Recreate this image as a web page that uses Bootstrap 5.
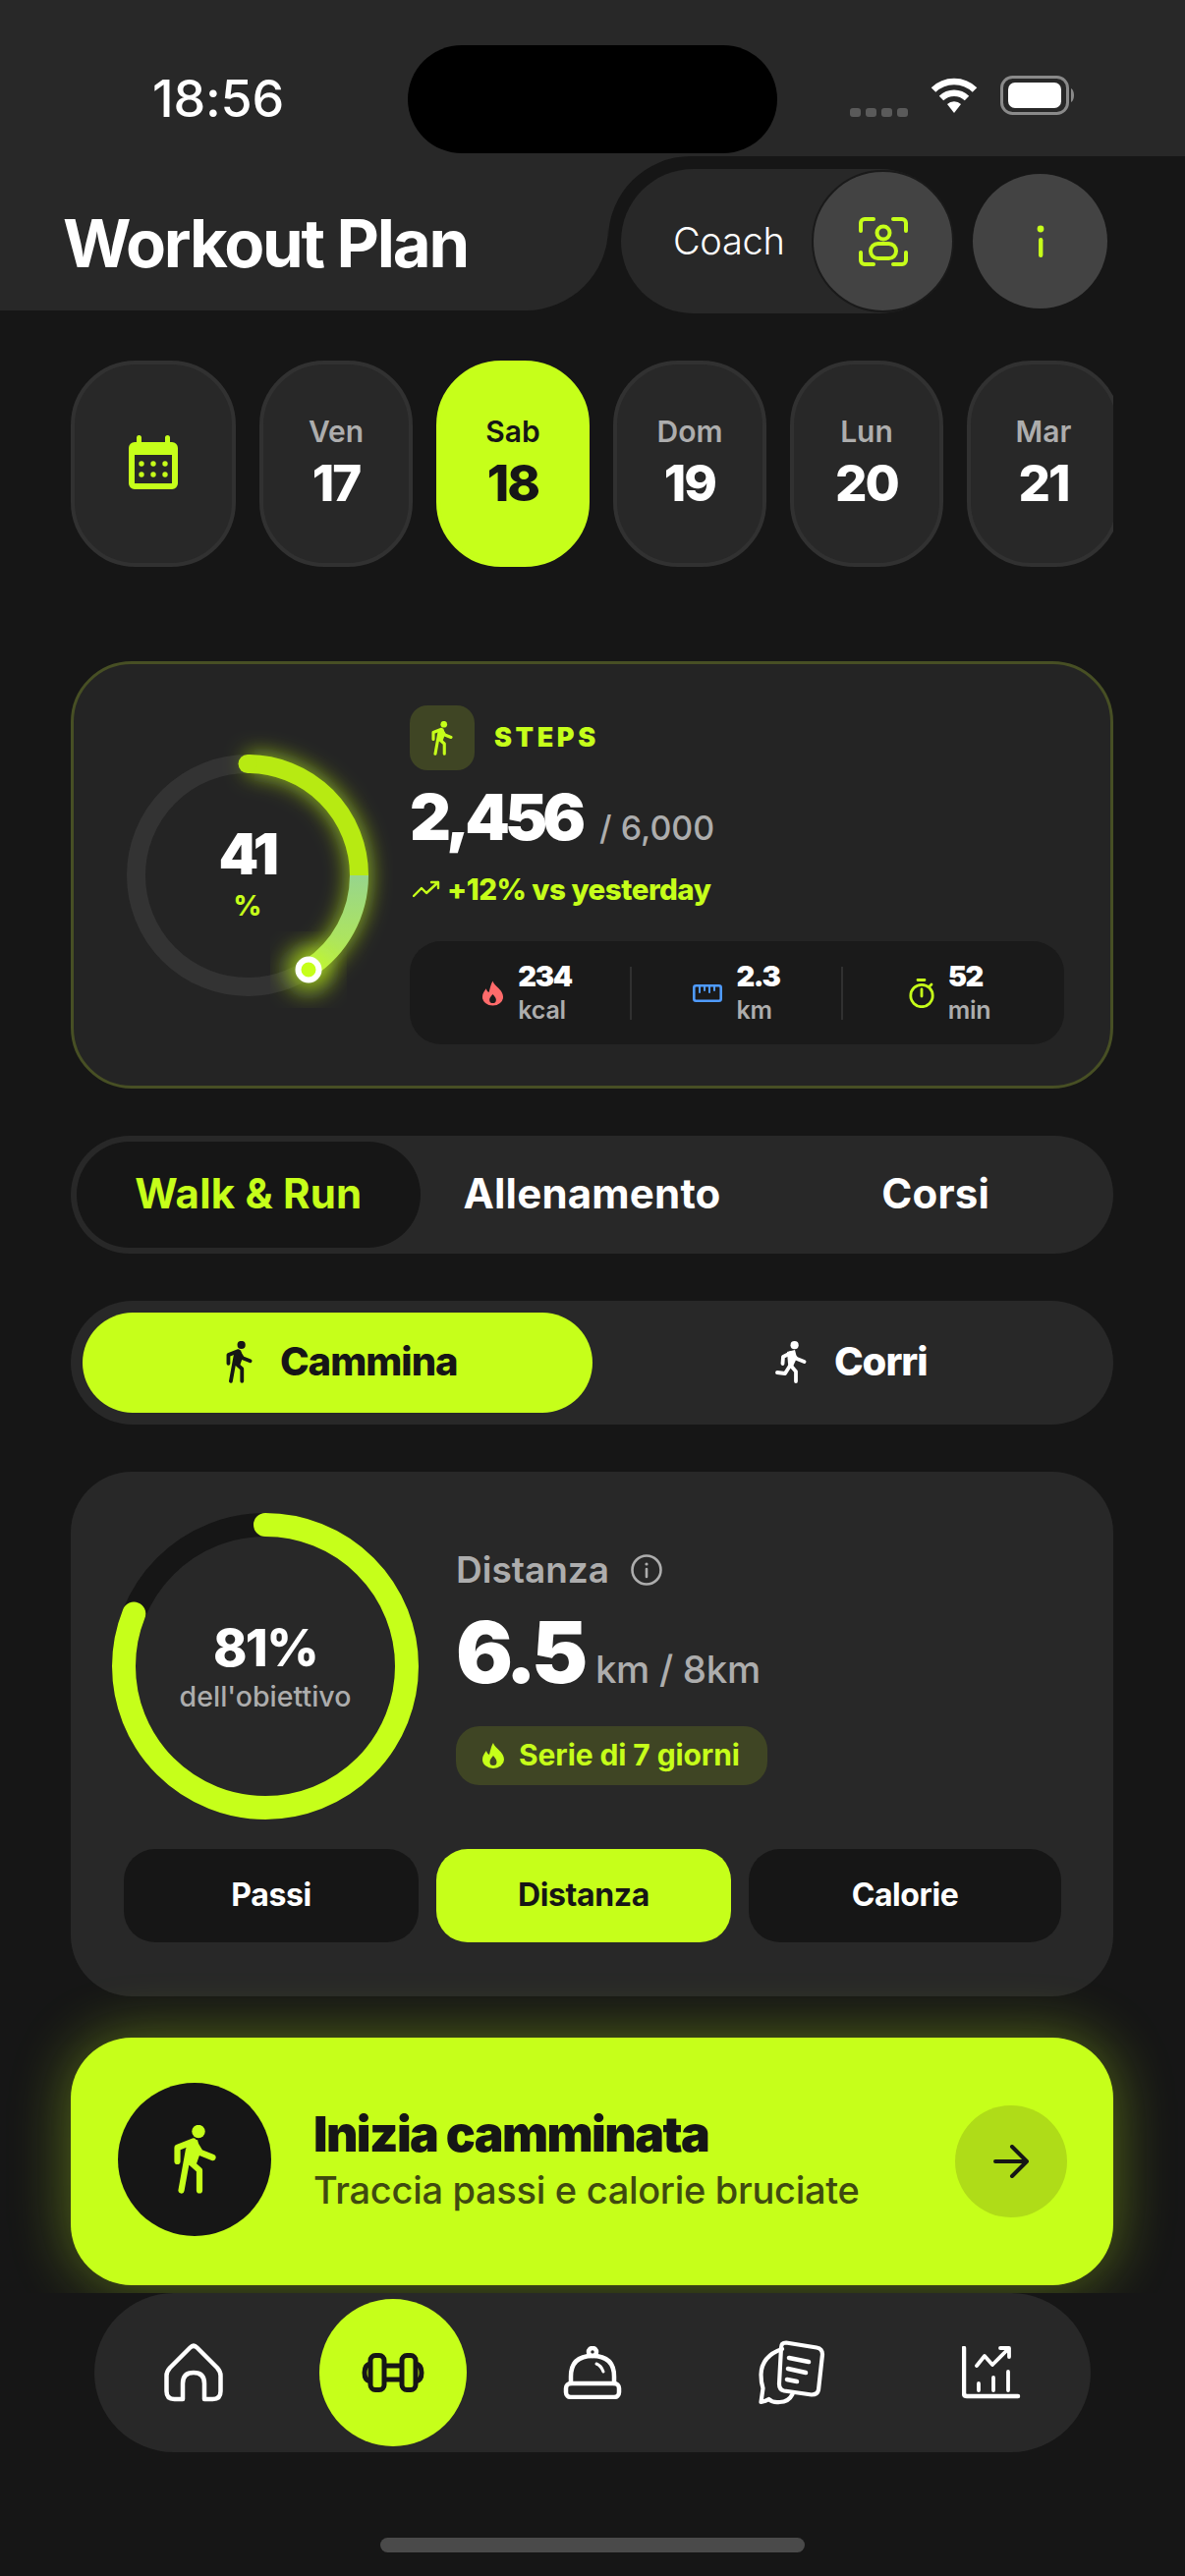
<!DOCTYPE html>
<html lang="it">
<head>
<meta charset="utf-8">
<title>Workout Plan</title>
<link href="https://cdn.jsdelivr.net/npm/bootstrap@5.3.0/dist/css/bootstrap.min.css" rel="stylesheet">
<style>
:root{--lime:#c6ff1a;--ink:#161616;--panel:#282828;--mute:#adadad;--olive:#3f4524}
html,body{background:var(--ink);margin:0}
body{width:1206px;height:2622px;overflow:hidden;font-family:Inter,"Liberation Sans",sans-serif;color:#fff}
svg{display:block;flex:none}
.statusbar{height:159px;background:var(--panel);padding-top:42px}
.clock{margin-left:155px;width:133px;font:500 52px/110px Inter,sans-serif;letter-spacing:-.2px;white-space:nowrap}
.island{margin-left:127px;width:376px;height:110px;border-radius:55px;background:#000}
.signal{margin-left:74px;gap:5px;margin-top:28px}
.signal i{display:block;width:11px;height:9px;border-radius:3px;background:#5a5a5a}
.wifi{margin-left:22px;margin-top:-7px}
.batt{margin-left:22px;margin-top:-7px}
.titlerow{height:160px}
.titleblock{width:619px;height:157px;background:var(--panel);border-bottom-right-radius:84px;padding-left:64px}
.pagetitle{font-size:67px;font-weight:700;letter-spacing:-2.2px;line-height:1;margin:20px 0 0;white-space:nowrap}
.coachwrap{flex:1;background:var(--panel)}
.coachin{height:160px;background:var(--ink);border-top-left-radius:84px;padding:13px 0 0 13px}
.coachpill{width:337px;height:147px;background:var(--panel);border-radius:74px;padding-left:53px}
.coachtxt{font-size:38px;font-weight:300;width:113px;letter-spacing:-.3px}
.coachico{width:145px;height:145px;margin:0 -2px 0 auto;border-radius:50%;background:#434343;border:2px solid #1a1a1a}
.infobtn{width:137px;height:137px;border-radius:50%;background:#434343;margin:5px 0 0 21px}
.page{padding:48px 73px 0 72px}
.days{height:210px;gap:24px;overflow:hidden}
.day{flex:0 0 156px;height:210px;border-radius:66px;background:var(--panel);border:4px solid #313131;padding-bottom:4px}
.day.calday{flex-basis:168px}
.dayname{font-size:30px;font-weight:600;color:var(--mute);line-height:34px}
.daynum{font-size:51px;font-weight:800;line-height:54px;letter-spacing:-2px;margin-top:9px}
.day.on{background:var(--lime);border-color:var(--lime)}
.day.on .dayname,.day.on .daynum{color:var(--ink)}
.stepcard{margin-top:96px;height:435px;background:#242424;border:3px solid #474f24;border-radius:62px;padding:0 47px 0 54px;gap:42px}
.ringbox{position:relative}
.ringlabel{position:absolute;inset:0}
.stepnum{font-size:58px;font-weight:900;line-height:60px;letter-spacing:-2.5px;margin-top:-3px}
.stepunit{font-size:28px;font-weight:800;color:var(--lime);line-height:34px;margin-top:6px}
.stepcol{flex:1;height:345px}
.stepicon{width:66px;height:66px;background:var(--olive);border-radius:18px}
.steplabel{font-size:27px;font-weight:900;color:var(--lime);letter-spacing:3.6px;margin-left:20px}
.stepbig{font-size:65px;font-weight:900;letter-spacing:-5px;line-height:60px;margin-top:18px}
.stepof{font-size:34px;font-weight:500;color:var(--mute);margin-left:19px;letter-spacing:0}
.trend{font-size:29.5px;font-weight:800;color:var(--lime);line-height:36px;margin:14px 0 0 3px;gap:7px;letter-spacing:-.5px}
.statbox{margin-top:auto;height:105px;background:#1a1a1a;border-radius:32px}
.statcell{gap:14px;height:100%}
.statcell.c1{width:224px;padding-left:14px}
.statcell.c2{width:213px}
.statcell.c3{width:225px;padding-right:8px}
.statval{font-size:29px;font-weight:900;letter-spacing:-1.4px;line-height:32px}
.statunit{font-size:25px;font-weight:600;color:var(--mute);line-height:32px;margin-top:2px;letter-spacing:-.2px}
.statdiv{width:2px;height:54px;background:#303030}
.tabs{margin-top:48px;height:120px;background:var(--panel);border-radius:60px;padding:6px}
.tabitem{flex:1;border-radius:54px;font-size:42px;font-weight:700;color:#fff;letter-spacing:.2px;padding-bottom:3px}
.tabitem.on{background:var(--ink);color:var(--lime)}
.segs{margin-top:48px;height:126px;background:var(--panel);border-radius:63px;padding:12px}
.segitem{flex:1;border-radius:51px;font-size:40px;font-weight:800;color:#fff;gap:28px;letter-spacing:-1px;padding:0 0 2px 9px}
.segitem.on{background:var(--lime);color:var(--ink)}
.distcard{margin-top:48px;height:534px;background:var(--panel);border-radius:62px;padding:42px 53px 0 42px}
.distrow{gap:38px}
.distpct{font-size:52px;font-weight:800;line-height:58px;letter-spacing:-1.6px}
.distgoal{font-size:28.5px;font-weight:500;color:var(--mute);line-height:32px;margin-top:4px}
.distname{font-size:37px;font-weight:600;color:var(--mute);gap:22px;line-height:40px;margin-top:2px}
.distbig{font-size:86px;font-weight:900;line-height:96px;letter-spacing:-5.4px;margin-top:16px}
.distof{font-size:38.5px;font-weight:500;color:var(--mute);margin-left:13px;letter-spacing:-.3px}
.streak{width:317px;height:60px;background:var(--olive);border-radius:24px;font-size:30px;font-weight:700;color:var(--lime);padding-left:26px;gap:14px;margin-top:10px;letter-spacing:-.1px}
.picks{margin:30px 0 0 12px;gap:18px}
.pick{flex:1 1 300px;height:95px;background:var(--ink);border-radius:32px;font-size:32px;font-weight:700;color:#fff;letter-spacing:-.4px;padding-bottom:2px}
.pick.wide{flex-basis:318px}
.pick.on{background:var(--lime);color:var(--ink)}
.cta{margin-top:42px;height:252px;background:var(--lime);border-radius:62px;padding:0 47px 0 48px;box-shadow:0 0 60px rgba(198,255,26,.38)}
.ctaicon{width:156px;height:156px;border-radius:50%;background:var(--ink);margin-top:-4px}
.ctatext{margin-left:43px;color:var(--ink);margin-top:-6px}
.ctatitle{font-size:50px;font-weight:900;line-height:56px;letter-spacing:-1.6px}
.ctasub{font-size:38px;font-weight:500;color:#3f4a10;line-height:44px;margin-top:7px;letter-spacing:-.3px}
.ctago{width:114px;height:114px;border-radius:50%;background:#afdc18;margin-left:auto}
.dock{margin-top:8px;height:288px;background:var(--ink);padding:0 96px}
.dockpill{height:162px;background:var(--panel);border-radius:81px;padding:0 26px;gap:53px}
.dockslot{width:150px;height:162px}
.dockon{width:150px;height:150px;border-radius:50%;background:var(--lime)}
.homebar{width:432px;height:15px;border-radius:8px;background:#4a4a4a;margin:87px 0 0 291px}
.figlime{color:#c6ff1a}
.figink{color:#161616}
.figwhite{color:#fff}
</style>
</head>
<body>
<svg class="d-none" aria-hidden="true">
  <symbol id="walker" viewBox="0 0 43 70">
    <circle cx="25" cy="6.500" r="6.700" fill="currentColor"/>
    <path d="M14 18l10-3 3 13-5 14-8-6z" fill="currentColor"/>
    <path d="M3.500 37V23L20 16.500 27 28l12.500 5M15 25L7.500 66.500M17 38l9 8v20.500" fill="none" stroke="currentColor" stroke-width="6.200" stroke-linecap="round" stroke-linejoin="round"/>
  </symbol>
  <symbol id="runner" viewBox="0 0 32 43">
    <circle cx="19.600" cy="4.200" r="4.100" fill="currentColor"/>
    <path d="M12 11l8-2 2 8-4 9-5-3z" fill="currentColor"/>
    <path d="M7.500 23l.5-7 8-4 6 6 7.500 3M15 24l6 7v10M15 25l-5 8-8-1" fill="none" stroke="currentColor" stroke-width="3.800" stroke-linecap="round" stroke-linejoin="round"/>
  </symbol>
</svg>
<div class="statusbar d-flex align-items-center">
  <div class="clock">18:56</div>
  <div class="island"></div>
  <div class="signal d-flex"><i></i><i></i><i></i><i></i></div>
  <svg class="wifi" width="50" height="38" viewBox="0 0 50 38" fill="none" stroke="#fff" stroke-width="6.5"><path d="M4 13.500a30 30 0 0 1 42 0"/><path d="M12 22a19 19 0 0 1 26 0"/><path d="M18 28l7 9 7-9a10 10 0 0 0-14 0z" fill="#fff" stroke="none"/></svg>
  <svg class="batt" width="76" height="40" viewBox="0 0 76 40" fill="none"><rect x="1.500" y="1.500" width="67" height="37" rx="11" stroke="#8a8a8a" stroke-width="3"/><rect x="8" y="7" width="54" height="26" rx="7" fill="#fff"/><path d="M72 13c2 1 3 4 3 7s-1 6-3 7z" fill="#8a8a8a"/></svg>
</div>
<div class="titlerow d-flex">
  <div class="titleblock d-flex align-items-center"><h1 class="pagetitle">Workout Plan</h1></div>
  <div class="coachwrap"><div class="coachin d-flex">
    <div class="coachpill d-flex align-items-center">
      <span class="coachtxt">Coach</span>
      <div class="coachico d-flex align-items-center justify-content-center">
        <svg width="50" height="50" viewBox="0 0 50 50" fill="none" stroke="#c6ff1a" stroke-width="4" stroke-linecap="round"><path d="M2 14V6a4 4 0 0 1 4-4h9M35 2h9a4 4 0 0 1 4 4v8M48 36v8a4 4 0 0 1-4 4h-9M15 48H6a4 4 0 0 1-4-4v-8"/><circle cx="25" cy="16" r="6.500"/><rect x="12" y="27" width="26" height="15" rx="7.500"/></svg>
      </div>
    </div>
    <div class="infobtn d-flex align-items-center justify-content-center">
      <svg width="10" height="34" viewBox="0 0 10 34" fill="#c6ff1a"><circle cx="5" cy="4" r="3.400"/><rect x="3" y="13" width="4.400" height="20" rx="2.200"/></svg>
    </div>
  </div></div>
</div>

<main class="page">
  <div class="days d-flex">
    <div class="day calday d-flex align-items-center justify-content-center">
      <svg width="50" height="55" viewBox="0 0 50 55"><path d="M10 0a2.500 2.500 0 0 1 3 2.500V7h24V2.500a2.500 2.500 0 0 1 5 0V7h2a6 6 0 0 1 6 6v36a6 6 0 0 1-6 6H6a6 6 0 0 1-6-6V13a6 6 0 0 1 6-6h2V2.500A2.500 2.500 0 0 1 10 0z" fill="#c6ff1a"/><rect x="6" y="20" width="38" height="29" fill="#282828"/><g fill="#c6ff1a"><circle cx="13" cy="29" r="2.700"/><circle cx="25" cy="29" r="2.700"/><circle cx="37" cy="29" r="2.700"/><circle cx="13" cy="40" r="2.700"/><circle cx="25" cy="40" r="2.700"/><circle cx="37" cy="40" r="2.700"/></g></svg>
    </div>
    <div class="day d-flex flex-column align-items-center justify-content-center"><span class="dayname">Ven</span><span class="daynum">17</span></div>
    <div class="day on d-flex flex-column align-items-center justify-content-center"><span class="dayname">Sab</span><span class="daynum">18</span></div>
    <div class="day d-flex flex-column align-items-center justify-content-center"><span class="dayname">Dom</span><span class="daynum">19</span></div>
    <div class="day d-flex flex-column align-items-center justify-content-center"><span class="dayname">Lun</span><span class="daynum">20</span></div>
    <div class="day d-flex flex-column align-items-center justify-content-center"><span class="dayname">Mar</span><span class="daynum">21</span></div>
  </div>

  <section class="stepcard d-flex align-items-center">
    <div class="ringbox">
      <svg width="246" height="246" viewBox="0 0 246 246" fill="none" overflow="visible">
        <defs><linearGradient id="tail" x1="0" y1="123" x2="0" y2="222" gradientUnits="userSpaceOnUse"><stop offset="0" stop-color="#97d58c"/><stop offset="1" stop-color="#b8ec48"/></linearGradient>
        <filter id="glow" x="-30%" y="-30%" width="160%" height="160%"><feGaussianBlur stdDeviation="11"/></filter></defs>
        <circle cx="123" cy="123" r="113.500" stroke="#333" stroke-width="19"/>
        <path d="M123 9.500A113.500 113.500 0 0 1 236.500 123A113.500 113.500 0 0 1 185 218" stroke="#c6ff1a" stroke-opacity=".75" stroke-width="20" filter="url(#glow)"/>
        <path d="M123 9.500A113.500 113.500 0 0 1 236.500 123" stroke="#b7ea12" stroke-width="19"/>
        <circle cx="123" cy="9.500" r="9.500" fill="#b7ea12"/>
        <path d="M236.500 123A113.500 113.500 0 0 1 185 218" stroke="url(#tail)" stroke-width="19"/>
        <circle cx="185" cy="219" r="24" fill="#c6ff1a" fill-opacity=".6" filter="url(#glow)"/>
        <circle cx="185" cy="219" r="10.500" fill="#c6ff1a" stroke="#fff" stroke-width="6"/>
      </svg>
      <div class="ringlabel d-flex flex-column align-items-center justify-content-center"><span class="stepnum">41</span><span class="stepunit">%</span></div>
    </div>
    <div class="stepcol d-flex flex-column">
      <div class="d-flex align-items-center">
        <div class="stepicon d-flex align-items-center justify-content-center">
          <svg class="figlime" width="22" height="35"><use href="#walker"/></svg>
        </div>
        <span class="steplabel">STEPS</span>
      </div>
      <div class="stepbig d-flex align-items-baseline">2,456<span class="stepof">/ 6,000</span></div>
      <div class="trend d-flex align-items-center">
        <svg width="28" height="20" viewBox="0 0 28 20" fill="none" stroke="#c6ff1a" stroke-width="2.400" stroke-linecap="round" stroke-linejoin="round"><path d="M1 17l8-8 5 5 12-11M19 3h7v6"/></svg>
        <span>+12% vs yesterday</span>
      </div>
      <div class="statbox d-flex align-items-center">
        <div class="statcell c1 d-flex align-items-center justify-content-center">
          <svg width="23" height="26" viewBox="0 0 24 26"><path d="M12 0c1 5 11 9 11 17a11 9 0 0 1-22 0c0-4 2-6 4-9 .5 2 1.500 3.500 3 4C9 8 10 3 12 0z" fill="#ff6b6b"/><path d="M12 14c1.500 2 3.500 3.500 3.500 6a3.500 3.500 0 0 1-7 0c0-2.500 2-4 3.500-6z" fill="#1a1a1a"/></svg>
          <div><div class="statval">234</div><div class="statunit">kcal</div></div>
        </div>
        <div class="statdiv"></div>
        <div class="statcell c2 d-flex align-items-center justify-content-center">
          <svg width="30" height="18" viewBox="0 0 30 18" fill="none" stroke="#4f9bff" stroke-width="2.600" stroke-linecap="round"><rect x="1.300" y="1.300" width="27.400" height="15.400" rx="2"/><path d="M7 2v6M12 2v4M17 2v6M22 2v4" stroke-width="2"/></svg>
          <div><div class="statval">2.3</div><div class="statunit">km</div></div>
        </div>
        <div class="statdiv"></div>
        <div class="statcell c3 d-flex align-items-center justify-content-center">
          <svg width="26" height="30" viewBox="0 0 26 30" fill="none" stroke="#c6ff1a" stroke-width="2.800" stroke-linecap="round"><circle cx="13" cy="17.500" r="11.200"/><path d="M9 1.500h7M13 11v7M23 6l-1.500 1.500"/></svg>
          <div><div class="statval">52</div><div class="statunit">min</div></div>
        </div>
      </div>
    </div>
  </section>

  <nav class="tabs d-flex">
    <div class="tabitem on d-flex align-items-center justify-content-center">Walk &amp; Run</div>
    <div class="tabitem d-flex align-items-center justify-content-center">Allenamento</div>
    <div class="tabitem d-flex align-items-center justify-content-center">Corsi</div>
  </nav>

  <div class="segs d-flex">
    <div class="segitem on d-flex align-items-center justify-content-center">
      <svg class="figink" width="27" height="43"><use href="#walker"/></svg>
      <span>Cammina</span>
    </div>
    <div class="segitem d-flex align-items-center justify-content-center">
      <svg class="figwhite" width="32" height="43"><use href="#runner"/></svg>
      <span>Corri</span>
    </div>
  </div>

  <section class="distcard">
    <div class="distrow d-flex align-items-center">
      <div class="ringbox">
        <svg width="312" height="312" viewBox="0 0 312 312" fill="none"><circle cx="156" cy="156" r="144" stroke="#161616" stroke-width="24"/><circle cx="156" cy="156" r="144" stroke="#c6ff1a" stroke-width="24" stroke-linecap="round" stroke-dasharray="733 905" transform="rotate(-90 156 156)"/></svg>
        <div class="ringlabel d-flex flex-column align-items-center justify-content-center"><span class="distpct">81%</span><span class="distgoal">dell'obiettivo</span></div>
      </div>
      <div>
        <div class="distname d-flex align-items-center">Distanza
          <svg width="32" height="32" viewBox="0 0 32 32" fill="none" stroke="#adadad" stroke-width="2.600" stroke-linecap="round"><circle cx="16" cy="16" r="14.500"/><path d="M16 15v8"/><circle cx="16" cy="10" r="1.600" fill="#adadad" stroke="none"/></svg>
        </div>
        <div class="distbig d-flex align-items-baseline">6.5<span class="distof">km / 8km</span></div>
        <div class="streak d-flex align-items-center">
          <svg width="24" height="28" viewBox="0 0 24 26"><path d="M12 0c1 5 11 9 11 17a11 9 0 0 1-22 0c0-4 2-6 4-9 .5 2 1.500 3.500 3 4C9 8 10 3 12 0z" fill="#c6ff1a"/><path d="M12 13c1.500 2 3.500 3.500 3.500 6.500a3.500 3.500 0 0 1-7 0c0-3 2-4.500 3.500-6.500z" fill="#3f4524"/></svg>
          <span>Serie di 7 giorni</span>
        </div>
      </div>
    </div>
    <div class="picks d-flex">
      <div class="pick d-flex align-items-center justify-content-center">Passi</div>
      <div class="pick on d-flex align-items-center justify-content-center">Distanza</div>
      <div class="pick wide d-flex align-items-center justify-content-center">Calorie</div>
    </div>
  </section>

  <section class="cta d-flex align-items-center">
    <div class="ctaicon d-flex align-items-center justify-content-center">
      <svg class="figlime" width="43" height="70"><use href="#walker"/></svg>
    </div>
    <div class="ctatext"><div class="ctatitle">Inizia camminata</div><div class="ctasub">Traccia passi e calorie bruciate</div></div>
    <div class="ctago d-flex align-items-center justify-content-center">
      <svg width="36" height="34" viewBox="0 0 36 34" fill="none" stroke="#161616" stroke-width="4" stroke-linecap="round" stroke-linejoin="round"><path d="M2 17h31M19 2l15 15-15 15"/></svg>
    </div>
  </section>
</main>

<footer class="dock">
  <nav class="dockpill d-flex">
    <div class="dockslot d-flex align-items-center justify-content-center">
      <svg width="60" height="60" viewBox="0 0 60 60" fill="none" stroke="#fff" stroke-width="4.500" stroke-linejoin="round"><path d="M26.500 4.500q3.500-3.500 7 0L54 25q3.500 4 3.500 8v16q0 8-8 8H41V41q0-11-11-11T19 41v16H10.500q-8 0-8-8V33q0-4 3.500-8z"/></svg>
    </div>
    <div class="dockslot d-flex align-items-center justify-content-center">
      <div class="dockon d-flex align-items-center justify-content-center">
        <svg width="64" height="40" viewBox="0 0 64 40" fill="none" stroke="#161616" stroke-width="5" stroke-linejoin="round"><rect x="9" y="2.500" width="14" height="35" rx="5"/><rect x="41" y="2.500" width="14" height="35" rx="5"/><path d="M23 13h18M23 27h18M9 11Q3 12 3 20t6 9M55 11q6 1 6 9t-6 9"/></svg>
      </div>
    </div>
    <div class="dockslot d-flex align-items-center justify-content-center">
      <svg width="60" height="54" viewBox="0 0 60 54" fill="none" stroke="#fff" stroke-width="4.500" stroke-linecap="round" stroke-linejoin="round"><circle cx="30" cy="6" r="4"/><path d="M8 38V31Q8 10 30 10t22 21v7"/><rect x="3" y="38" width="54" height="14" rx="5"/><path d="M34 18q5 2 7 8" stroke-width="3"/></svg>
    </div>
    <div class="dockslot d-flex align-items-center justify-content-center">
      <svg width="68" height="66" viewBox="0 0 68 66" fill="none" stroke="#fff" stroke-width="4.200" stroke-linecap="round" stroke-linejoin="round"><path d="M24 9Q3 16 2.500 35q0 8 2 14l-2 14q5-1 8-3 4 4 11 3 9 0 13-8"/><path d="M28 2.500l31 5q6 1 6 7l-4 36q-1 5-7 5l-28-4q-5-1-5-7l2-37q0-5 5-5z"/><path d="M31 18l20 4M30 29l18 4M29 40l10 2" stroke-width="4.600"/></svg>
    </div>
    <div class="dockslot d-flex align-items-center justify-content-center">
      <svg width="60" height="54" viewBox="0 0 60 54" fill="none" stroke="#fff" stroke-width="3.800" stroke-linecap="round" stroke-linejoin="round"><path d="M2 2v46q0 3 3 3h52" stroke-width="4.500"/><path d="M17 38v7M32 32v13M47 26v19"/><path d="M15 20l8-10 8 9 16-16M39 2h9v9"/></svg>
    </div>
  </nav>
  <div class="homebar"></div>
</footer>
</body>
</html>
